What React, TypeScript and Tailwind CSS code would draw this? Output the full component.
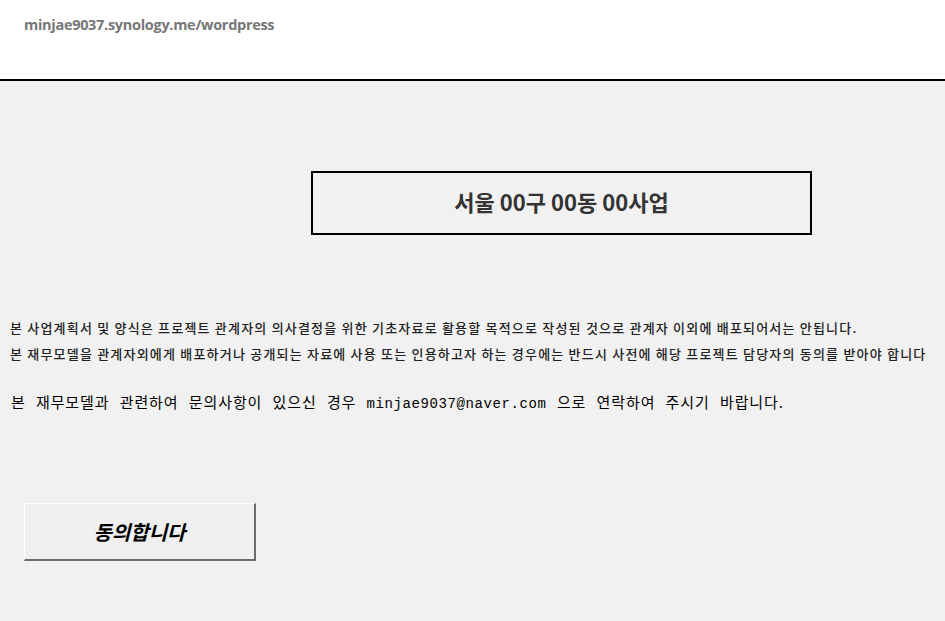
export default function App() {
  const kr = "font-['Noto_Sans_CJK_KR','Noto_Sans',sans-serif]";
  return (
    <div className="min-h-[621px] w-[945px] bg-[#f1f1f1] flex flex-col">
      <header className="h-[81px] bg-white border-b-2 border-black px-6 pt-[14px]">
        <div className="text-[14.5px] font-bold text-[#777777] font-['Open_Sans',sans-serif] tracking-[-0.3px]">
          minjae9037.synology.me/wordpress
        </div>
      </header>

      <div className="pt-[90px] pl-[311px]">
        <div className="w-[501px] h-[64px] border-2 border-black flex items-center justify-center pb-[3px]">
          <span className={`${kr} text-[22px] font-bold text-[#333333]`}>서울 00구 00동 00사업</span>
        </div>
      </div>

      <div className={`${kr} pl-[10px] pt-[80px] text-[13px] font-medium text-[#222222] leading-[26px] tracking-[1.2px] whitespace-nowrap`}>
        <p>본 사업계획서 및 양식은 프로젝트 관계자의 의사결정을 위한 기초자료로 활용할 목적으로 작성된 것으로 관계자 이외에 배포되어서는 안됩니다.</p>
        <p>본 재무모델을 관계자외에게 배포하거나 공개되는 자료에 사용 또는 인용하고자 하는 경우에는 반드시 사전에 해당 프로젝트 담당자의 동의를 받아야 합니다</p>
      </div>

      <p className={`${kr} pl-[11px] mt-[25px] h-[20px] leading-[20px] text-[15px] text-black tracking-[0.9px] [word-spacing:6px] whitespace-nowrap`}>
        본 재무모델과 관련하여 문의사항이 있으신 경우{" "}
        <span className="font-['Liberation_Mono',monospace] text-[14px] tracking-[0.6px]">minjae9037@naver.com</span>{" "}
        으로 연락하여 주시기 바랍니다.
      </p>

      <div className="pl-6 pt-[91px]">
        <button className="w-[232px] h-[58px] bg-[#efefef] border-t border-l border-white border-r-2 border-b-2 border-r-[#6b6b6b] border-b-[#6b6b6b] flex items-center justify-center">
          <span className={`${kr} text-[20px] font-bold italic text-black`}>동의합니다</span>
        </button>
      </div>
    </div>
  );
}
